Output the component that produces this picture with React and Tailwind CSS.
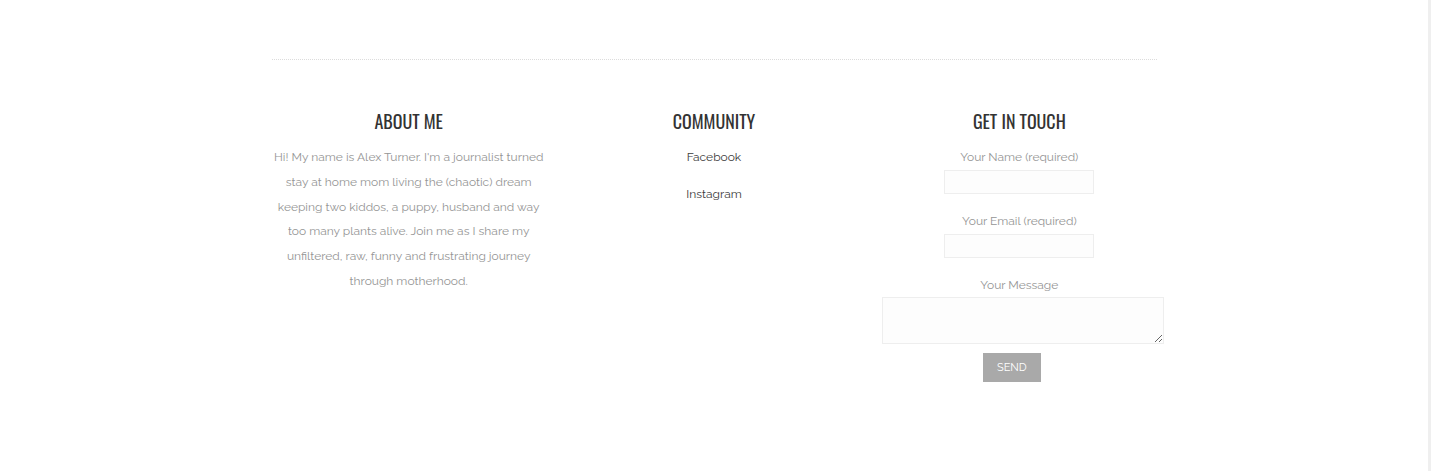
export default function App() {
  const body = { fontFamily: "Raleway, Lato, 'Open Sans', sans-serif" };
  const head = { fontFamily: "Oswald, 'Liberation Sans Narrow', 'DejaVu Sans Condensed', sans-serif" };
  return (
    <div className="flex w-[1431px] h-[471px] bg-white overflow-hidden">
      <div className="flex-1">
        <div className="mx-auto w-[885px] pt-[59px]">
          <div className="border-t border-dotted border-[#dcdcdc]" />
          <div className="grid grid-cols-3 gap-[31px] mt-[47px]">
            <div className="flex flex-col items-center">
              <h3 className="text-[18px] leading-[28px] text-[#333] uppercase mb-[10px]" style={head}>About Me</h3>
              <p className="text-[12px] leading-[24.8px] text-[#959595] text-center" style={body}>
                Hi! My name is Alex Turner. I'm a journalist turned stay at home mom living the (chaotic) dream keeping two kiddos, a puppy, husband and way too many plants alive. Join me as I share my unfiltered, raw, funny and frustrating journey through motherhood.
              </p>
            </div>
            <div className="flex flex-col items-center">
              <h3 className="text-[18px] leading-[28px] text-[#333] uppercase mb-[10px]" style={head}>Community</h3>
              <div className="flex flex-col items-center gap-[13px] text-[12px] leading-[24px] text-[#3a3a3a]" style={body}>
                <a>Facebook</a>
                <a>Instagram</a>
              </div>
            </div>
            <div className="flex flex-col items-center">
              <h3 className="text-[18px] leading-[28px] text-[#333] uppercase mb-[10px]" style={head}>Get In Touch</h3>
              <div className="flex flex-col items-center text-[12px] leading-[24px] text-[#959595]" style={body}>
                <label>Your Name (required)</label>
                <input className="mt-px w-[150px] h-[24px] border border-[#eeeeee] bg-[#fdfdfd]" />
                <label className="mt-[15px]">Your Email (required)</label>
                <input className="mt-px w-[150px] h-[24px] border border-[#eeeeee] bg-[#fdfdfd]" />
                <label className="mt-[15px]">Your Message</label>
                <textarea className="w-[282px] h-[47px] border border-[#eeeeee] bg-[#fdfdfd] ml-[7px] resize-y" />
                <button className="mt-[9px] w-[58px] h-[29px] bg-[#a9a9a9] text-white text-[11px] uppercase -ml-[15px]" style={body}>Send</button>
              </div>
            </div>
          </div>
        </div>
      </div>
      <div className="w-[3px] bg-[#efefef]" />
    </div>
  );
}
